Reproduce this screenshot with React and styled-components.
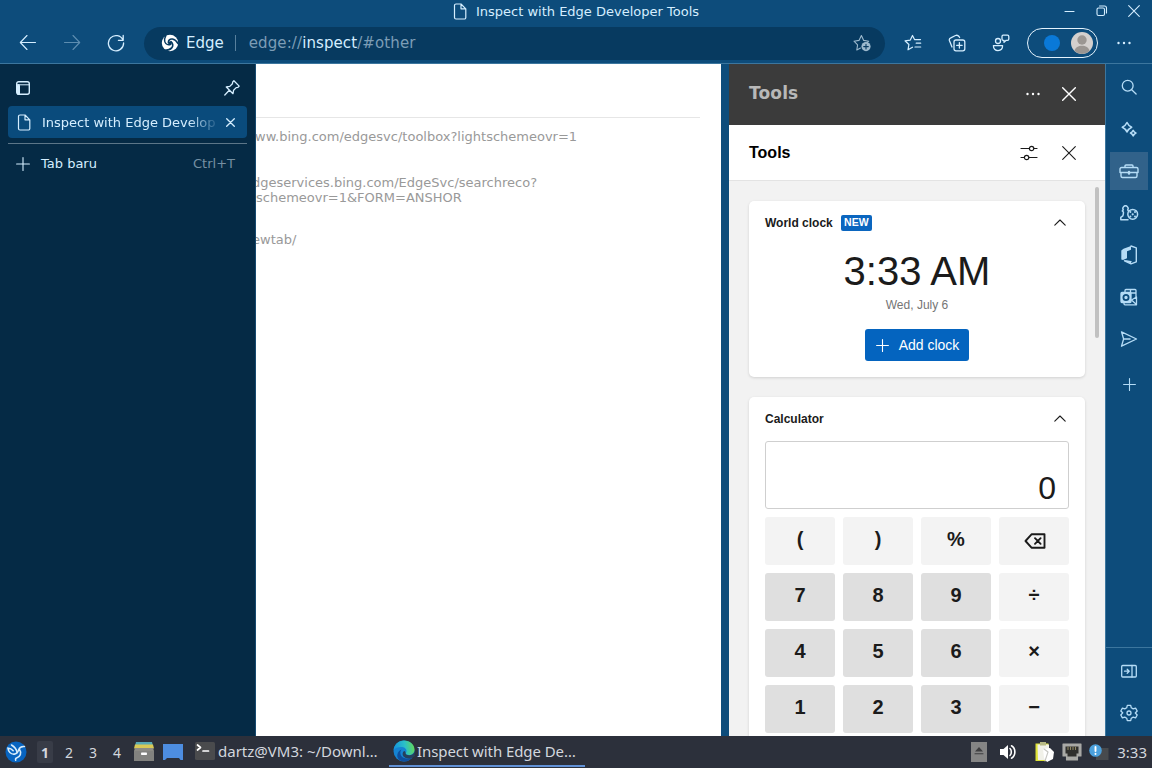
import React from "react";
import styled, { createGlobalStyle, css } from "styled-components";

const GlobalStyle = createGlobalStyle`
  * {
    box-sizing: border-box;
  }
  body {
    margin: 0;
    overflow: hidden;
  }
  button {
    border: none;
    padding: 0;
    background: none;
    color: inherit;
    font: inherit;
  }
`;

//Icons, all drawn on a grid of their own size
const Svg = styled.svg`
  display: block;
  flex: none;
  fill: none;
  stroke: currentColor;
  stroke-width: ${(p) => p.$weight || 1.1};
  stroke-linecap: round;
  stroke-linejoin: round;
`;

const Icon = ({ w = 18, h = w, weight, children }) => (
  <Svg width={w} height={h} viewBox={`0 0 ${w} ${h}`} $weight={weight}>
    {children}
  </Svg>
);

const BackIcon = () => (
  <Icon>
    <path d="M16.500 8.500H1.500M8 1.500 1.300 8.500l6.700 7" />
  </Icon>
);

const ForwardIcon = () => (
  <Icon>
    <path d="M1.500 8.500h15M10 1.500l6.700 7-6.700 7" />
  </Icon>
);

const RefreshIcon = () => (
  <Icon weight={1.3}>
    <path d="M16 6.200A7.600 7.600 0 1 0 16.600 9M16.200 1.500v4.800h-4.800" />
  </Icon>
);

const EdgeMark = () => (
  <Icon w={18}>
    <circle cx="9" cy="9" r="8.200" fill="#fff" stroke="none" />
    <circle cx="9.200" cy="9" r="1.700" fill="#073a60" stroke="none" />
    <g stroke="#073a60" strokeWidth="1.600">
      <path d="M7.500 9C7 6.200 9 4.600 11.500 5c2.200.4 4 2 5.500 4.500" />
      <path d="M10 7.700c2.200 1.800 2.300 4.300.7 6.200-1.500 1.700-3.700 2.300-6.500 2.300" />
      <path d="M9.800 10.300c-2.600 1.100-5 .2-5.900-2.200-.8-2 -.3-4.200 1-6.500" strokeWidth="1.300" />
    </g>
  </Icon>
);

const StarAddIcon = () => (
  <Icon>
    <path d="M7.500 14 3.800 16l.8-5.200L1 7.200l5-.8L8.400 1.500l2.300 4.900 5 .8-1.500 1.500" />
    <circle cx="13" cy="12.600" r="4.600" fill="currentColor" stroke="none" />
    <path d="M13 10.300v4.600M10.700 12.600h4.600" stroke="#073a60" />
  </Icon>
);

const FavoritesIcon = () => (
  <Icon weight={1.2}>
    <path d="M8.500 13.200 4 15.800l.9-5.300L1 6.800l5.300-.7L8.500 1.500l2 4.100h6M12.200 9.200h4.500M11 13h5.700" />
  </Icon>
);

const CollectionsIcon = () => (
  <Icon weight={1.3}>
    <rect x="6" y="6" width="10.800" height="10.800" rx="2" />
    <path d="M11.400 8.700v5.400M8.700 11.400h5.400M4 13 1.500 6.800a2.400 2.400 0 0 1 1.300-3L7.500 1.500a3 3 0 0 1 3.500 1l.6 1" />
  </Icon>
);

const ShareProfileIcon = () => (
  <Icon weight={1.3}>
    <circle cx="6" cy="7" r="2.500" />
    <path d="M1.400 11.600h9.200c0 3-1.800 5-4.600 5s-4.600-2-4.600-5zM11 1.200h4.500a1.300 1.300 0 0 1 1.300 1.300v2.500a1.300 1.300 0 0 1-1.300 1.300h-1.300l-2.200 2V6.300H11a1.300 1.300 0 0 1-1-1.300V2.500a1.300 1.300 0 0 1 1-1.300z" />
  </Icon>
);

const DotsIcon = () => (
  <Icon w={14} h={4}>
    <g fill="currentColor" stroke="none">
      <circle cx="1.500" cy="2" r="1.200" />
      <circle cx="7" cy="2" r="1.200" />
      <circle cx="12.500" cy="2" r="1.200" />
    </g>
  </Icon>
);

const CloseIcon = ({ size = 12, weight }) => (
  <Icon w={size} weight={weight}>
    <path d={`M.7.7 ${size - 0.7} ${size - 0.7}M${size - 0.7}.7.7 ${size - 0.7}`} />
  </Icon>
);

const PageIcon = () => (
  <Icon w={14} h={17} weight={1.2}>
    <path d="M3 1h5l4.800 4.800V14.500a1.500 1.500 0 0 1-1.500 1.500H3a1.500 1.500 0 0 1-1.500-1.500v-12A1.500 1.500 0 0 1 3 1zM8 1v4.800h4.800" />
  </Icon>
);

const TabsIcon = () => (
  <Icon w={14} weight={1.4}>
    <rect x=".7" y=".7" width="12.600" height="12.600" rx="2" />
    <path d="M1 3.800h12" strokeWidth="1" />
    <path d="M2.500 4.500v8" strokeWidth="3" />
  </Icon>
);

const PinIcon = () => (
  <Icon w={16} weight={1.3}>
    <path d="m9.900.8 5.300 5.300-1.200 1.200-1.800.3-2.600 2.600-.6 3.500L2.300 7l3.500-.6 2.600-2.600.3-1.800zM5.300 10.300.8 15" />
  </Icon>
);

const PlusIcon = ({ size = 14 }) => (
  <Icon w={size}>
    <path d={`M${size / 2} .6v${size - 1.2}M.6 ${size / 2}h${size - 1.2}`} />
  </Icon>
);

const TuneIcon = () => (
  <Icon w={18} h={16} weight={1.2}>
    <path d="M1 3.500h8.200M14 3.500h3M1 12.500h3.200M9 12.500h8" />
    <circle cx="11.600" cy="3.500" r="2.200" />
    <circle cx="6.600" cy="12.500" r="2.200" />
  </Icon>
);

const ChevronIcon = () => (
  <Icon w={12} h={9}>
    <path d="M.8 6.200 6 1l5.200 5.200" />
  </Icon>
);

const BackspaceIcon = () => (
  <Icon w={22} h={16} weight={1.9}>
    <path d="M7.500 1.300H20.500v13.400H7.500L1.500 8zM11 5.200l5.600 5.600M16.600 5.200 11 10.800" />
  </Icon>
);

const SearchIcon = () => (
  <Icon w={16} weight={1.3}>
    <circle cx="6.700" cy="6.700" r="5.400" />
    <path d="m10.700 10.700 4.400 4.300" />
  </Icon>
);

const SparkIcon = () => (
  <Icon w={16} weight={1.6}>
    <path d="M6 1.500Q7.500 4.800 10.700 6.200 7.500 7.600 6 11 4.500 7.600 1.300 6.200 4.500 4.800 6 1.500zM12.200 9.400q.9 1.900 2.700 2.700-1.800.8-2.700 2.700-.9-1.900-2.700-2.700 1.800-.8 2.700-2.700z" />
  </Icon>
);

const ToolboxIcon = () => (
  <Icon w={20} h={16} weight={1.4}>
    <path d="M2.500 4.500h15A1.500 1.500 0 0 1 19 6V9.500H1V6A1.500 1.500 0 0 1 2.500 4.500zM2 9.500V13A1.500 1.500 0 0 0 3.500 14.500h13A1.500 1.500 0 0 0 18 13V9.500M6 4.500V3a1 1 0 0 1 1-1h6a1 1 0 0 1 1 1v1.500" />
    <path d="M10 9v1.500" strokeWidth="2.400" />
  </Icon>
);

//pawn with a casino chip beside it
const GamesIcon = () => (
  <Icon w={20} h={16} weight={1.5}>
    <path d="M9 14.700H1.800v-2.300l2-1.500c.6-1.300.7-2.600.6-3.900L3.300 6l1-1.200a2.600 2.600 0 1 1 4.400 0L9.500 6" />
    <circle cx="13.700" cy="9.300" r="4.900" />
    <g stroke="none" fill="currentColor">
      <circle cx="13.700" cy="9.300" r="1.100" />
      <circle cx="11.400" cy="7" r="1" />
      <circle cx="16" cy="7" r="1" />
      <circle cx="11.400" cy="11.600" r="1" />
      <circle cx="16" cy="11.600" r="1" />
    </g>
  </Icon>
);

const OfficeIcon = () => (
  <Icon w={18} h={20} weight={1.4}>
    <path
      d="M11 1 3.500 3.800 1.300 5.500v9L3 15l4-1.700V6.200l4-1.400z"
      fill="currentColor"
      stroke="none"
    />
    <path d="m11 1 5.300 1.800v14L11 18.800l-6.500-3 6.500.8" />
    <path d="m5 15.500 6 .8v2.500z" fill="currentColor" stroke="none" />
  </Icon>
);

const OutlookIcon = () => (
  <Icon w={18} h={18} weight={1.3}>
    <path d="M5 4V2.500a1 1 0 0 1 1-1h9a1 1 0 0 1 1 1V9M10.500 1.800V5M11 5h5" />
    <path d="M4 15v.8a1 1 0 0 0 1 1h11.500V9L11.500 12l5 4.500" />
    <rect x="1" y="4.500" width="10" height="10" rx="1" fill="currentColor" />
    <circle cx="6" cy="9.500" r="2.600" stroke="#0d4c7b" strokeWidth="1.800" />
  </Icon>
);

const SendIcon = () => (
  <Icon w={18} h={16} weight={1.3}>
    <path d="M1.500 .8 16.500 8 1.500 15.200 3.600 8zM3.600 8h6.500" />
  </Icon>
);

const HidePanelIcon = () => (
  <Icon w={16} h={14} weight={1.3}>
    <rect x=".7" y="1.500" width="14.600" height="11.500" rx="1" />
    <path d="M11 1.500V13M3.500 7.200h4.700M6.200 5.200l2 2-2 2" />
  </Icon>
);

const GearIcon = () => (
  <Icon w={18} weight={1.3}>
    <path d="m7.300 1.300-.6 2.500-1.900 1.100-2.400-.8L.8 7l1.900 1.800L.8 11l1.600 2.900 2.400-.8 1.900 1.100.6 2.500h3.400l.6-2.500 1.900-1.100 2.400.8 1.600-2.900L15.300 9l1.900-2-1.600-2.900-2.400.8-1.900-1.100-.6-2.500z" />
    <circle cx="9" cy="9" r="2" />
  </Icon>
);

const BirdIcon = () => (
  <Icon w={22} weight={1.5}>
    <circle cx="11" cy="11" r="10.500" fill="#0864c0" stroke="none" />
    <g stroke="#d8ecfb">
      <path d="M2.800 7c2.200.2 4 1 5.400 2.700M2.800 7c.6 3.700 2.700 6 6.200 6.300" />
      <path d="M6.500 4c3 1.800 5 4.200 5.700 7.500" />
      <path d="M19.500 5.500c-3-.3-5 .8-5.700 3-.7 2.300-2 4.300-4.800 4.800M14.500 8.500c2.500 3.500.8 7.300-3 8.500-1 .4-1.200 1.200-.8 2.300" />
    </g>
  </Icon>
);

const FilesIcon = () => (
  <Icon w={22}>
    <g stroke="none">
      <path d="M3 1h16l1 4H2z" fill="#57a9b5" />
      <path d="M2 3.500h18l1 4H1z" fill="#d9c955" />
      <path d="M2 7h18l1 3v10H1V10z" fill="#8c8b85" />
      <path d="M1 10h20v10H1z" fill="#82827f" />
      <rect x="8" y="11.500" width="6" height="2.500" rx=".8" fill="#fff" />
    </g>
  </Icon>
);

const DesktopIcon = () => (
  <Icon w={20} h={16}>
    <path d="M0 0h20v16h-2.500l-1.500-2H4l-2 2H0z" fill="#4d8de0" stroke="none" />
  </Icon>
);

const TerminalIcon = () => (
  <Icon w={20} h={18}>
    <rect width="20" height="18" rx="1.500" fill="#4a4b4d" stroke="none" />
    <path d="m2.500 3 3 2.500-3 2.500M8 9h5.500" stroke="#fff" strokeWidth="1.700" />
  </Icon>
);

const EdgeIcon = () => (
  <Icon w={22}>
    <defs>
      <linearGradient id="edgeTop" x1="0" y1="0.500" x2="1" y2="0.400">
        <stop offset="0" stopColor="#1593dc" />
        <stop offset=".55" stopColor="#2bc0c8" />
        <stop offset="1" stopColor="#63d957" />
      </linearGradient>
    </defs>
    <g stroke="none">
      <circle cx="11" cy="11" r="10.500" fill="#1583d2" />
      <path
        d="M.6 10C1.200 4.500 5.500.5 11 .5c6 0 10.500 4.300 10.500 9 0 3.500-2.500 5.500-5.500 5.500-2 0-3.500-.8-3.500-1.500 0-.5 1-1 1-2.500C13.500 8.500 11 7 8 7c-3 0-6 1.300-7.400 3z"
        fill="url(#edgeTop)"
      />
      <path
        d="M8.500 9.500c-2.500 3-1 8.500 4.500 9 2.500.2 5-.6 6.800-2-1.800 3.100-5 5-8.800 5-5 0-7.500-4-6.500-7.500.6-2.200 2-3.800 4-4.500z"
        fill="#0e4f9f"
      />
      <path
        d="M12.600 13.200c0 1.200 1.700 2 3.600 2 2.500 0 4-.9 5-2.600l.8 3.400-2.500 1.500c-3 1.500-7 1.200-9-1-1.500-1.800-1-4.500.6-5.500 1 .2 1.500 1.300 1.500 2.200z"
        fill="#26405c"
      />
    </g>
  </Icon>
);

const EjectIcon = () => (
  <Icon w={16} h={20}>
    <rect width="16" height="20" fill="#858585" stroke="none" />
    <path d="M4 9.500 8 5l4 4.500z" fill="#3e3e40" stroke="none" />
    <path d="M4 11.700h8" stroke="#3e3e40" />
  </Icon>
);

const VolumeIcon = () => (
  <Icon w={18} h={16} weight={1.6}>
    <path d="M1 5h3.500L9 1v14l-4.500-4H1z" fill="#fff" stroke="none" />
    <path d="M11 4.500c1.800 1.500 1.800 5.500 0 7M12.500 1.800c4.500 2.500 4.500 9.900 0 12.400" stroke="#fff" />
  </Icon>
);

const ClipboardIcon = () => (
  <Icon w={21} h={22}>
    <g stroke="none">
      <path d="M1.500 2.500h13V20h-13z" fill="#dfe338" />
      <path d="M3.500 3.500h11.500V19h-11z" fill="#f1f1e9" />
      <rect x="6" y="1" width="6" height="3.500" fill="#b8ba86" />
      <path d="m9 8 7-1 4 4-1 7-6 3-3-4z" fill="#fff" />
    </g>
    <path d="m10 8 4 3-3 9" stroke="#c6c6c2" />
  </Icon>
);

const NetworkIcon = () => (
  <Icon w={20} h={18}>
    <path d="M1 1h18v12h-3.500v4h-11v-4H1z" fill="#a9a9a6" stroke="#a9a9a6" />
    <path d="M3.500 3.500h13v7h-2v3h-9v-3h-2z" fill="#30302e" stroke="none" />
    <path d="M6 4v2.500M8.500 4v2.500M11 4v2.500M13.500 4v2.500" stroke="#8f8763" />
  </Icon>
);

const NoticeIcon = () => (
  <Icon w={20} h={18}>
    <path d="M7 5h12.500v12H7z" fill="#474a4d" stroke="none" />
    <circle cx="6.500" cy="7.500" r="6.300" fill="#4ba0dc" stroke="none" />
    <path d="M6.500 4V8M6.500 10.800v.2" stroke="#fff" strokeWidth="1.900" />
  </Icon>
);

const keys = [
  "(", ")", "%", "back",
  "7", "8", "9", "÷",
  "4", "5", "6", "×",
  "1", "2", "3", "−",
];

const railIcons = [
  SearchIcon,
  SparkIcon,
  ToolboxIcon,
  GamesIcon,
  OfficeIcon,
  OutlookIcon,
  SendIcon,
];

function BrowserHeader() {
  return (
    <Header>
      <TitleBar>
        <PageTitle>
          <PageIcon />
          <span>Inspect with Edge Developer Tools</span>
        </PageTitle>
        <WindowButtons>
          <Icon w={12}>
            <path d="M1 6.500h9" />
          </Icon>
          <Icon w={12}>
            <rect x="1" y="3" width="7.500" height="7.500" rx="1.500" />
            <path d="M3.500 1h5A2 2 0 0 1 10.500 3v5" />
          </Icon>
          <CloseIcon />
        </WindowButtons>
      </TitleBar>
      <Toolbar>
        <ToolButton>
          <BackIcon />
        </ToolButton>
        <ToolButton $dim>
          <ForwardIcon />
        </ToolButton>
        <ToolButton>
          <RefreshIcon />
        </ToolButton>
        <AddressBar>
          <EdgeMark />
          <SiteName>Edge</SiteName>
          <Url>
            edge://<b>inspect</b>/#other
          </Url>
          <StarAddIcon />
        </AddressBar>
        <ToolButton>
          <FavoritesIcon />
        </ToolButton>
        <ToolButton>
          <CollectionsIcon />
        </ToolButton>
        <ToolButton>
          <ShareProfileIcon />
        </ToolButton>
        <Profile>
          <SyncDot />
          <Icon w={22}>
            <circle cx="11" cy="11" r="11" fill="#d4d0ce" stroke="none" />
            <circle cx="11" cy="8" r="4.700" fill="#9b9692" stroke="none" />
            <path d="M3.500 19c1-7 14-7 15 0a11 11 0 0 1-15 0z" fill="#9b9692" stroke="none" />
          </Icon>
        </Profile>
        <MenuButton>
          <DotsIcon />
        </MenuButton>
      </Toolbar>
    </Header>
  );
}

function TabPane() {
  return (
    <Tabs>
      <TabsTop>
        <TabsIcon />
        <PinIcon />
      </TabsTop>
      <ActiveTab>
        <PageIcon />
        <TabLabel>Inspect with Edge Develop</TabLabel>
        <CloseIcon size={9} weight={1.3} />
      </ActiveTab>
      <NewTab>
        <PlusIcon />
        <span>Tab baru</span>
        <Shortcut>Ctrl+T</Shortcut>
      </NewTab>
    </Tabs>
  );
}

function InspectPage() {
  return (
    <Page>
      <PageHead />
      <Target $shift={-1}>ww.bing.com/edgesvc/toolbox?lightschemeovr=1</Target>
      <Target $top={31} $shift={-4}>
        dgeservices.bing.com/EdgeSvc/searchreco?
        <br />
        schemeovr=1&amp;FORM=ANSHOR
      </Target>
      <Target $top={27} $shift={-4}>
        ewtab/
      </Target>
    </Page>
  );
}

function ToolsPanel() {
  return (
    <Panel>
      <PanelTitle>
        <h2>Tools</h2>
        <DotsIcon />
        <CloseIcon size={14} weight={1.4} />
      </PanelTitle>
      <PanelBar>
        <h3>Tools</h3>
        <TuneIcon />
        <CloseIcon size={14} />
      </PanelBar>
      <PanelBody>
        <Cards>
          <Card $height={176}>
            <CardHead>
              <h4>World clock</h4>
              <Badge>NEW</Badge>
              <ChevronIcon />
            </CardHead>
            <Clock>
              <Time>3:33 AM</Time>
              <Day>Wed, July 6</Day>
              <AddClock>
                <PlusIcon size={13} />
                Add clock
              </AddClock>
            </Clock>
          </Card>
          <Card $height={400}>
            <CardHead>
              <h4>Calculator</h4>
              <ChevronIcon />
            </CardHead>
            <Display>0</Display>
            <Keypad>
              {keys.map((key) => (
                <Key key={key} $digit={/\d/.test(key)}>
                  {key === "back" ? <BackspaceIcon /> : key}
                </Key>
              ))}
            </Keypad>
          </Card>
        </Cards>
        <Scroll />
      </PanelBody>
    </Panel>
  );
}

function SideRail() {
  return (
    <Rail>
      <RailGroup>
        {railIcons.map((RailIcon, i) => (
          <RailButton key={i} $active={RailIcon === ToolboxIcon}>
            <RailIcon />
          </RailButton>
        ))}
        <RailButton $last>
          <PlusIcon size={13} />
        </RailButton>
      </RailGroup>
      <RailGroup $bottom>
        <RailButton>
          <HidePanelIcon />
        </RailButton>
        <RailButton>
          <GearIcon />
        </RailButton>
      </RailGroup>
    </Rail>
  );
}

function Taskbar() {
  return (
    <Bar>
      <Launcher>
        <BirdIcon />
      </Launcher>
      <Workspace $active>1</Workspace>
      <Workspace>2</Workspace>
      <Workspace>3</Workspace>
      <Workspace>4</Workspace>
      <QuickLaunch>
        <FilesIcon />
        <DesktopIcon />
      </QuickLaunch>
      <Task $width={198}>
        <TerminalIcon />
        <TaskLabel>dartz@VM3: ~/Downl…</TaskLabel>
      </Task>
      <Task $width={196} $active>
        <EdgeIcon />
        <TaskLabel $spacing="-0.08px">Inspect with Edge De…</TaskLabel>
      </Task>
      <Tray>
        <EjectIcon />
        <VolumeIcon />
        <ClipboardIcon />
        <NetworkIcon />
        <NoticeIcon />
        <Time24>3:33</Time24>
      </Tray>
    </Bar>
  );
}

function App() {
  return (
    <Screen>
      <GlobalStyle />
      <BrowserHeader />
      <Main>
        <TabPane />
        <InspectPage />
        <ToolsPanel />
        <SideRail />
      </Main>
      <Taskbar />
    </Screen>
  );
}

const Screen = styled.div`
  width: 1152px;
  height: 768px;
  display: flex;
  flex-direction: column;
  overflow: hidden;
  background: #0d4c7b;
  color: #d5eeff;
  font-family: "DejaVu Sans", sans-serif;
  font-size: 13px;
`;

const Header = styled.header`
  flex: none;
  height: 64px;
  background: #0d4c7b;
  border-bottom: 1px solid #3c769e;
`;

const TitleBar = styled.div`
  height: 23px;
  display: grid;
  grid-template-columns: 1fr auto 1fr;
  align-items: center;
`;

const PageTitle = styled.div`
  grid-column: 2;
  display: flex;
  align-items: center;
  gap: 9px;
  padding-bottom: 1px;
`;

const WindowButtons = styled.div`
  justify-self: end;
  display: flex;
  gap: 20px;
  padding: 0 12px 1px 0;
`;

const Toolbar = styled.div`
  height: 40px;
  display: flex;
  align-items: center;
  padding-left: 6px;
`;

const ToolButton = styled.button`
  width: 44px;
  height: 32px;
  display: flex;
  align-items: center;
  justify-content: center;
  opacity: ${(p) => (p.$dim ? 0.4 : 1)};
`;

const AddressBar = styled.div`
  width: 741px;
  height: 33px;
  margin: 0 6px;
  padding: 0 14px 0 17px;
  display: flex;
  align-items: center;
  border-radius: 17px;
  background: #073a60;
  font-size: 15px;

  > svg:last-child {
    color: #9cb9cd;
  }
`;

const SiteName = styled.span`
  margin-left: 7px;
  padding-right: 11px;
  border-right: 1px solid #58809d;
  line-height: 16px;
`;

const Url = styled.span`
  flex: 1;
  margin-left: 13px;
  color: #7c9db6;
  letter-spacing: 0.1px;

  b {
    font-weight: normal;
    color: #d5eeff;
  }
`;

const Profile = styled.div`
  width: 71px;
  height: 30px;
  margin-left: 4px;
  padding-right: 4px;
  display: flex;
  align-items: center;
  justify-content: flex-end;
  gap: 11px;
  border: 1.5px solid #e4f3fd;
  border-radius: 15px;
`;

const SyncDot = styled.span`
  width: 16px;
  height: 16px;
  border-radius: 50%;
  background: #0a79d8;
`;

const MenuButton = styled(ToolButton)`
  flex: 1;
  padding-right: 2px;
`;

const Main = styled.main`
  flex: 1;
  min-height: 0;
  display: flex;
`;

const Tabs = styled.aside`
  width: 256px;
  padding: 8px 8px 0;
  background: #052a45;
  border-right: 1px solid #164a70;
`;

const TabsTop = styled.div`
  height: 32px;
  padding: 0 7px 0 8px;
  display: flex;
  align-items: center;
  justify-content: space-between;
`;

const ActiveTab = styled.div`
  height: 32px;
  margin-top: 2px;
  padding: 0 12px 0 9px;
  display: flex;
  align-items: center;
  border-radius: 4px;
  background: #0a4b7c;
`;

const TabLabel = styled.span`
  flex: 1;
  margin: 0 9px 0 11px;
  white-space: nowrap;
  mask-image: linear-gradient(90deg, #000 84%, rgba(0, 0, 0, 0.2) 98%);
`;

const NewTab = styled.div`
  height: 40px;
  margin-top: 5px;
  padding: 0 12px 0 8px;
  display: flex;
  align-items: center;
  gap: 11px;
  border-top: 1px solid #5c7688;
`;

const Shortcut = styled.span`
  margin-left: auto;
  color: #7590a3;
`;

const Page = styled.section`
  width: 465px;
  background: #fff;
  overflow: hidden;
  color: #999;
  white-space: nowrap;
`;

const PageHead = styled.div`
  height: 54px;
  margin: 0 21px 11px 0;
  border-bottom: 1px solid #e6e6e6;
`;

const Target = styled.div`
  margin-top: ${(p) => p.$top || 0}px;
  text-indent: ${(p) => p.$shift}px;
  line-height: 15px;
`;

const Panel = styled.section`
  width: 376px;
  margin-left: 8px;
  display: flex;
  flex-direction: column;
  background: #f2f2f2;
  color: #1b1b1b;
  font-family: "Liberation Sans", sans-serif;
`;

const panelRow = css`
  flex: none;
  padding: 0 29px 0 20px;
  display: flex;
  align-items: center;
`;

const PanelTitle = styled.div`
  ${panelRow}
  height: 61px;
  padding-bottom: 2px;
  gap: 22px;
  background: #3b3b3b;
  color: #fff;

  h2 {
    flex: 1;
    margin: 0 0 2px;
    color: #b8b8b8;
    font: bold 17px "DejaVu Sans", sans-serif;
    letter-spacing: 0.15px;
  }
`;

const PanelBar = styled.div`
  ${panelRow}
  height: 56px;
  gap: 24px;
  background: #fff;
  border-bottom: 1px solid #e3e3e3;

  h3 {
    flex: 1;
    margin: 0;
    color: #000;
    font-size: 16px;
  }
`;

const PanelBody = styled.div`
  flex: 1;
  min-height: 0;
  display: flex;
  overflow: hidden;
`;

const Cards = styled.div`
  width: 366px;
  padding: 20px 10px 0 20px;
  display: flex;
  flex-direction: column;
  gap: 20px;
`;

const Scroll = styled.div`
  width: 4px;
  height: 151px;
  margin-top: 6px;
  border-radius: 2px;
  background: #c1c1c1;
`;

const Card = styled.div`
  flex: none;
  height: ${(p) => p.$height}px;
  padding: 0 16px;
  border-radius: 5px;
  background: #fff;
  box-shadow: 0 1px 3px rgba(0, 0, 0, 0.14);
`;

const CardHead = styled.div`
  height: 44px;
  padding-right: 3px;
  display: flex;
  align-items: center;

  h4 {
    margin: 0;
    font-size: 12px;
  }
  svg {
    margin-left: auto;
  }
`;

const Badge = styled.span`
  width: 31px;
  height: 16px;
  margin-left: 8px;
  border-radius: 2px;
  background: #0b66bf;
  color: #fff;
  font-size: 10.5px;
  font-weight: bold;
  line-height: 15px;
  text-align: center;
`;

const Clock = styled.div`
  display: flex;
  flex-direction: column;
  align-items: center;
`;

const Time = styled.div`
  font-size: 40px;
  line-height: 52px;
`;

const Day = styled.div`
  margin-top: 1px;
  color: #757575;
  font-size: 12px;
  line-height: 14px;
`;

const AddClock = styled.button`
  width: 104px;
  height: 32px;
  margin-top: 17px;
  padding: 0 0 0 1px;
  display: flex;
  align-items: center;
  justify-content: center;
  gap: 10px;
  border-radius: 3px;
  background: #0464bf;
  color: #fff;
  font-size: 14px;
`;

const Display = styled.div`
  height: 68px;
  padding: 0 12px 2px;
  display: flex;
  align-items: flex-end;
  justify-content: flex-end;
  border: 1px solid #cfcfcf;
  border-radius: 3px;
  font-size: 32px;
  line-height: 36px;
`;

const Keypad = styled.div`
  margin-top: 8px;
  display: grid;
  grid-template-columns: repeat(4, 70px);
  grid-auto-rows: 48px;
  gap: 8px;
`;

const Key = styled.button`
  padding-bottom: 3px;
  display: flex;
  align-items: center;
  justify-content: center;
  border-radius: 3px;
  background: ${(p) => (p.$digit ? "#dfdfdf" : "#f3f3f3")};
  font-size: 20px;
  font-weight: bold;

  svg {
    margin: 2px 0 0 1px;
  }
`;

const Rail = styled.nav`
  width: 47px;
  display: flex;
  flex-direction: column;
  justify-content: space-between;
  border-left: 1px solid #3c769e;
  color: #b5dcf6;
`;

const RailGroup = styled.div`
  padding: 4px 4px;
  display: flex;
  flex-direction: column;
  gap: 4px;
  ${(p) =>
    p.$bottom &&
    css`
      border-top: 1px solid #3c769e;
    `}
`;

const RailButton = styled.button`
  width: 38px;
  height: 38px;
  margin-top: ${(p) => (p.$last ? 3 : 0)}px;
  display: flex;
  align-items: center;
  justify-content: center;
  background: ${(p) => (p.$active ? "#31628a" : "none")};
`;

const Bar = styled.footer`
  flex: none;
  height: 32px;
  display: flex;
  align-items: center;
  background: #2c303b;
  color: #d3d7de;
  font-family: "Noto Sans", sans-serif;
  font-size: 15px;
`;

const Launcher = styled.div`
  width: 33px;
  padding-left: 5px;
`;

const Workspace = styled.div`
  width: 16px;
  height: 22px;
  margin: 0 4px;
  line-height: 23px;
  text-align: center;
  font-size: 14px;
  ${(p) =>
    p.$active &&
    css`
      border-radius: 2px;
      background: #383c47;
      font-weight: bold;
    `}
`;

const QuickLaunch = styled.div`
  padding: 0 9px 0 4px;
  display: flex;
  align-items: center;
  gap: 8px;
`;

const Task = styled.div`
  width: ${(p) => p.$width - (p.$active ? 0 : 1)}px;
  height: 30px;
  padding-left: ${(p) => (p.$active ? 4 : 3)}px;
  display: flex;
  align-items: center;
  gap: ${(p) => (p.$active ? 2 : 3)}px;
  border-bottom: 2px solid ${(p) => (p.$active ? "#6191d6" : "transparent")};
`;

const TaskLabel = styled.span`
  letter-spacing: ${(p) => p.$spacing || "0"};
  white-space: nowrap;
`;

const Tray = styled.div`
  margin-left: auto;
  padding-right: 5px;
  display: flex;
  align-items: center;

  > svg {
    margin-right: 7px;
  }
  > svg:nth-child(1) {
    margin-right: 12px;
  }
  > svg:nth-child(2) {
    margin-right: 17px;
  }
`;

const Time24 = styled.span`
  margin-left: 1px;
`;

export default App;
